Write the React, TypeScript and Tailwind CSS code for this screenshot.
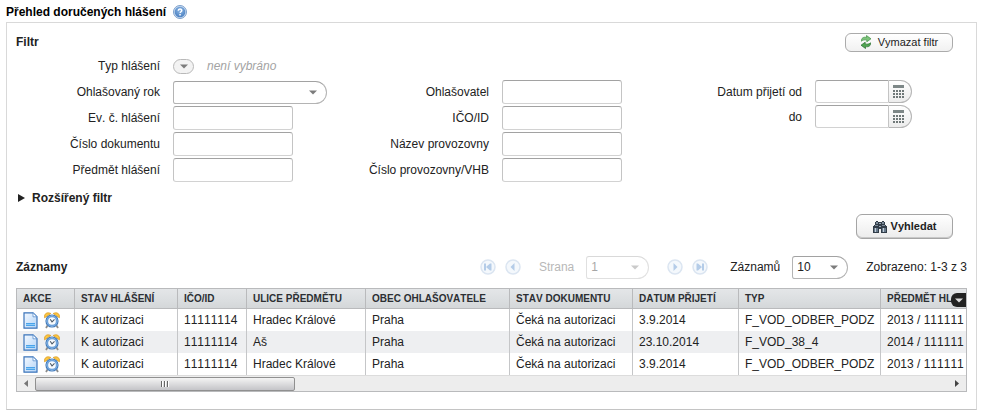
import { ReactNode } from "react";
import clsx from "clsx";

type Row = {
  stav: string;
  ico: string;
  ulice: string;
  obec: string;
  dokument: string;
  prijeti: string;
  typ: string;
  predmet: string;
};

const rows: Row[] = [
  {
    stav: "K autorizaci",
    ico: "11111114",
    ulice: "Hradec Králové",
    obec: "Praha",
    dokument: "Čeká na autorizaci",
    prijeti: "3.9.2014",
    typ: "F_VOD_ODBER_PODZ",
    predmet: "2013 / 111111",
  },
  {
    stav: "K autorizaci",
    ico: "11111114",
    ulice: "Aš",
    obec: "Praha",
    dokument: "Čeká na autorizaci",
    prijeti: "23.10.2014",
    typ: "F_VOD_38_4",
    predmet: "2014 / 111111",
  },
  {
    stav: "K autorizaci",
    ico: "11111114",
    ulice: "Hradec Králové",
    obec: "Praha",
    dokument: "Čeká na autorizaci",
    prijeti: "3.9.2014",
    typ: "F_VOD_ODBER_PODZ",
    predmet: "2013 / 111111",
  },
];

const columns = [
  { title: "AKCE", width: "w-[58px]" },
  { title: "STAV HLÁŠENÍ", width: "w-[103px]" },
  { title: "IČO/ID", width: "w-[69px]" },
  { title: "ULICE PŘEDMĚTU", width: "w-[119px]" },
  { title: "OBEC OHLAŠOVATELE", width: "w-[144px]" },
  { title: "STAV DOKUMENTU", width: "w-[123px]" },
  { title: "DATUM PŘIJETÍ", width: "w-[106px]" },
  { title: "TYP", width: "w-[142px]" },
  { title: "PŘEDMĚT HL", width: "w-[85px]" },
];

const inputClass =
  "border border-[#c4c4c4] border-t-[#a2a2a2] border-b-[#d2d2d2] bg-white px-1.5 text-xs outline-none";

const HelpIcon = () => (
  <svg width="14" height="14" viewBox="0 0 14 14">
    <defs>
      <radialGradient id="help" cx="50%" cy="35%" r="65%">
        <stop offset="0" stopColor="#8fb9e6" />
        <stop offset="1" stopColor="#4a7fc0" />
      </radialGradient>
    </defs>
    <circle cx="7" cy="7" r="6.5" fill="#c9dcf1" stroke="#7c9fcb" />
    <circle cx="7" cy="7" r="5.3" fill="url(#help)" />
    <path
      d="M5.2 5.7c0-2.3 3.6-2.3 3.6-.2 0 1.3-1.7 1.3-1.7 2.6"
      fill="none"
      stroke="#fff"
      strokeWidth="1.4"
    />
    <rect x="6.3" y="9" width="1.5" height="1.5" fill="#fff" />
  </svg>
);

const RefreshIcon = () => (
  <svg width="12" height="14" viewBox="0 0 12 14">
    <path
      d="M1.500 6.200C1.200 2.800 3.500 1.800 6.500 2.400V.5L11 3.800 6.800 6.800V5.100C4.500 4.500 3 4.900 1.500 6.200z"
      fill="#7cc47a"
      stroke="#3f8f43"
      strokeWidth=".7"
    />
    <path
      d="M10.500 7.800C10.800 11.200 8.500 12.200 5.500 11.600V13.500L1 10.200 5.200 7.200V8.900C7.500 9.500 9 9.100 10.500 7.800z"
      fill="#4fa551"
      stroke="#256b2d"
      strokeWidth=".7"
    />
  </svg>
);

const BinocularsIcon = () => (
  <svg width="14" height="12" viewBox="0 0 14 12" shapeRendering="crispEdges">
    <path d="M3 0h2v1h4V0h2v1h1v3h1v1h1v7H8V8H6v4H0V5h1V4h1V1h1z" fill="#323d48" />
    <path d="M3 1h2v2H3zM9 1h2v2H9zM2 4h3v1H2zM9 4h3v1H9z" fill="#7d8c9a" />
    <path d="M6 2h2v1H6zM6 5h2v1H6z" fill="#98a5b2" />
    <path d="M1 7h4v4H1zM9 7h4v4H9z" fill="#66788a" />
    <path d="M2 7h1v4H2zM10 7h1v4h-1z" fill="#c3ced9" />
  </svg>
);

const CalendarIcon = () => (
  <svg width="12" height="14" viewBox="0 0 12 14" shapeRendering="crispEdges">
    <rect width="11" height="3" fill="#7d8787" />
    {[5, 8, 11].map((y) =>
      [0, 3, 6, 9].map((x) => (
        <rect key={`${x} ${y}`} x={x} y={y} width="2" height="2" fill="#6f7878" />
      )),
    )}
  </svg>
);

const DocumentIcon = () => (
  <svg width="15" height="17" viewBox="0 0 15 17">
    <defs>
      <linearGradient id="doc" x1="0" y1="0" x2="1" y2="1">
        <stop offset="0" stopColor="#f4f9ff" />
        <stop offset="1" stopColor="#b4d4f7" />
      </linearGradient>
    </defs>
    <path
      d="M1 .8h9l4 4v11.400H1z"
      fill="url(#doc)"
      stroke="#3b74ba"
      strokeWidth="1.200"
    />
    <path d="M10 .8v4h4z" fill="#fff" stroke="#5b8fce" strokeWidth=".8" />
    <rect x="3" y="11" width="9" height="3" fill="#4aa3ea" />
    <rect x="3" y="12" width="9" height="1" fill="#8ecbf8" />
  </svg>
);

const ClockIcon = () => (
  <svg width="16" height="17" viewBox="0 0 16 17">
    <path d="M3.500 13.500l-1.500 2.500M12.500 13.500l1.500 2.500" stroke="#8b8b8b" strokeWidth="1.800" />
    <path
      d="M.6 5.800C-.2 1.600 3.200-.3 6.800 1.500zM15.400 5.800C16.200 1.600 12.800-.3 9.200 1.500z"
      fill="#fbc844"
      stroke="#dc9b22"
      strokeWidth=".8"
    />
    <circle cx="8" cy="9" r="6" fill="#f8fbfe" stroke="#3f78b8" strokeWidth="1.200" />
    <circle cx="8" cy="9" r="4.700" fill="none" stroke="#6ea3dc" strokeWidth="1.700" />
    <path d="M6.200 7.300L8 9.800l2.500-2.500" fill="none" stroke="#4d5a68" strokeWidth="1.100" />
  </svg>
);

const Arrow = ({ className }: { className?: string }) => (
  <svg width="8" height="5" viewBox="0 0 8 5" className={className}>
    <path d="M0 .5h8l-4 4z" fill="currentColor" />
  </svg>
);

const Field = ({
  id,
  label,
  children,
}: {
  id: string;
  label: string;
  children?: ReactNode;
}) => (
  <div className="flex h-6 items-center gap-[13px]">
    <label htmlFor={id} className="w-36 shrink-0 text-right">
      {label}
    </label>
    {children ?? (
      <input id={id} type="text" className={clsx(inputClass, "h-6 w-30 rounded-[3px]")} />
    )}
  </div>
);

const DateField = ({ id, label }: { id: string; label: string }) => (
  <div className="flex h-[23px] items-center gap-[13px]">
    <label htmlFor={id} className="w-36 shrink-0 text-right">
      {label}
    </label>
    <div className="flex">
      <input
        id={id}
        type="text"
        className={clsx(inputClass, "h-[23px] w-[74px] rounded-l-[3px]")}
      />
      <button
        type="button"
        aria-label="Kalendář"
        className="flex h-[23px] w-[23px] items-center rounded-r-full border border-l-0 border-[#b5b5b5] bg-linear-to-b from-white to-[#ececec] pl-1"
      >
        <CalendarIcon />
      </button>
    </div>
  </div>
);

const Select = ({
  id,
  value,
  className,
  disabled,
}: {
  id: string;
  value: string;
  className: string;
  disabled?: boolean;
}) => (
  <div className={clsx("relative", disabled && "opacity-40")}>
    <select
      id={id}
      disabled={disabled}
      className={clsx(
        "block h-[23px] appearance-none rounded-l-[3px] rounded-r-xl border border-[#b4b4b4] border-t-[#a2a2a2] bg-white pl-1 text-xs outline-none",
        className,
      )}
    >
      <option>{value}</option>
    </select>
    <Arrow className="pointer-events-none absolute top-1/2 right-2.5 -mt-0.5 text-[#7c7c7c]" />
  </div>
);

const PagerButton = ({ label, path }: { label: string; path: string }) => (
  <button type="button" disabled aria-label={label}>
    <svg width="16" height="16" viewBox="0 0 16 16">
      <circle cx="8" cy="8" r="7" fill="#f4f8fc" stroke="#dbe5f1" strokeWidth="1.500" />
      <path d={path} fill="#b4cce8" />
    </svg>
  </button>
);

const Filter = () => (
  <section>
    <div className="flex h-5 items-center justify-between pr-3.5">
      <h2 className="font-bold">Filtr</h2>
      <button
        type="button"
        className="flex h-[19px] w-27 items-center justify-center gap-1.5 rounded-md border border-[#ababab] bg-linear-to-b from-white to-[#f1f1f1] text-[11px]"
      >
        <RefreshIcon />
        Vymazat filtr
      </button>
    </div>
    <div className="mt-0.5 grid grid-cols-[329fr_313fr_309fr]">
      <div className="flex flex-col gap-0.5">
        <Field id="typ" label="Typ hlášení">
          <button
            id="typ"
            type="button"
            className="flex h-[15px] w-[21px] items-center justify-center rounded-full border border-[#b9b9b9] bg-[#f3f3f3] text-[#7c7c7c]"
          >
            <Arrow />
          </button>
          <span className="text-[#a3a3a3] italic">není vybráno</span>
        </Field>
        <Field id="rok" label="Ohlašovaný rok">
          <Select id="rok" value="" className="w-[154px]" />
        </Field>
        <Field id="evc" label="Ev. č. hlášení" />
        <Field id="cislo" label="Číslo dokumentu" />
        <Field id="predmet" label="Předmět hlášení" />
      </div>
      <div className="flex flex-col gap-0.5 pt-[26px]">
        <Field id="ohlasovatel" label="Ohlašovatel" />
        <Field id="ico" label="IČO/ID" />
        <Field id="nazev" label="Název provozovny" />
        <Field id="vhb" label="Číslo provozovny/VHB" />
      </div>
      <div className="flex flex-col gap-0.5 pt-[26px]">
        <DateField id="od" label="Datum přijetí od" />
        <DateField id="do" label="do" />
      </div>
    </div>
    <button type="button" className="mt-2 flex h-4 items-center gap-[7px] pl-0.5 font-bold">
      <svg width="7" height="8" viewBox="0 0 7 8">
        <path d="M0 0l7 4-7 4z" fill="#222" />
      </svg>
      Rozšířený filtr
    </button>
    <div className="mt-2 flex justify-end pr-3.5">
      <button
        type="button"
        className="flex h-[25px] w-[97px] items-center justify-center gap-1 rounded-md border border-[#a5a5a5] bg-linear-to-b from-white to-[#ececec] text-[11px] font-bold shadow-[inset_0_-1px_0_#c8c8c8]"
      >
        <BinocularsIcon />
        Vyhledat
      </button>
    </div>
  </section>
);

const Pager = () => (
  <div className="mt-4 flex h-6 items-center justify-between">
    <h2 className="font-bold">Záznamy</h2>
    <div className="flex items-center gap-[18px]">
      <div className="flex items-center gap-[9px]">
        <PagerButton label="První" path="M4 4.500h2v7H4zM10 4.500v7L6 8zM10 4.500h1.500v7H10z" />
        <PagerButton label="Předchozí" path="M9.500 4v8l-4-4z" />
      </div>
      <div className="flex items-center gap-3">
        <label htmlFor="strana" className="text-[#b8b8b8]">
          Strana
        </label>
        <Select id="strana" value="1" className="w-[63px]" disabled />
      </div>
      <div className="flex items-center gap-[9px]">
        <PagerButton label="Další" path="M6.500 4v8l4-4z" />
        <PagerButton label="Poslední" path="M10 4.500h2v7h-2zM4.500 4.500v7h1.500L10 8 6 4.500z" />
      </div>
      <div className="ml-1 flex items-center gap-3">
        <label htmlFor="zaznamu">Záznamů</label>
        <Select id="zaznamu" value="10" className="w-14" />
      </div>
      <span>Zobrazeno: 1-3 z 3</span>
    </div>
  </div>
);

const Records = () => (
  <div className="relative mt-[9px] border border-[#b9babc]">
    <table className="w-full table-fixed border-separate border-spacing-0 whitespace-nowrap">
      <thead>
        <tr className="h-5 bg-linear-to-b from-[#e4e6e8] via-[#dcdfe1] to-[#d3d6d8]">
          {columns.map((column) => (
            <th
              key={column.title}
              className={clsx(
                "border-r border-b border-[#b9babc] p-0 pl-1.5 text-left text-[10px] leading-4 font-bold text-[#2c2f33] last:border-r-0",
                column.width,
              )}
            >
              {column.title}
            </th>
          ))}
        </tr>
      </thead>
      <tbody>
        {rows.map((row, i) => (
          <tr key={i} className="h-[22px] even:bg-[#eeeff1]">
            <td className="border-r border-[#c5c6c8] p-0 pl-1.5">
              <div className="flex items-center gap-1.5">
                <button type="button" aria-label="Detail">
                  <DocumentIcon />
                </button>
                <button type="button" aria-label="Historie">
                  <ClockIcon />
                </button>
              </div>
            </td>
            {Object.values(row).map((value, j) => (
              <td key={j} className="border-r border-[#c5c6c8] p-0 pl-1.5 last:border-r-0">
                {value}
              </td>
            ))}
          </tr>
        ))}
      </tbody>
    </table>
    <button
      type="button"
      aria-label="Sloupce"
      className="absolute top-1 right-0 flex h-3.5 w-[15px] items-center justify-center rounded-l-md bg-[#222] text-[#ddd]"
    >
      <Arrow />
    </button>
    {/* horizontal scrollbar */}
    <div className="flex h-4 items-center border-t border-[#dcdcdc] bg-[#ededed]">
      <button type="button" aria-label="Doleva" className="flex w-[18px] justify-center">
        <svg width="4" height="7" viewBox="0 0 4 7">
          <path d="M4 0v7L0 3.500z" fill="#777" />
        </svg>
      </button>
      <div className="flex-1">
        <div className="flex h-3.5 w-[260px] items-center justify-center gap-px rounded-xs border border-[#909090] bg-linear-to-b from-[#f4f4f4] via-[#dcdcde] to-[#c4c4c8]">
          <span className="h-1.5 w-0.5 border-r border-white bg-[#666]" />
          <span className="h-1.5 w-0.5 border-r border-white bg-[#666]" />
          <span className="h-1.5 w-0.5 border-r border-white bg-[#666]" />
        </div>
      </div>
      <button type="button" aria-label="Doprava" className="flex w-[18px] justify-center">
        <svg width="4" height="7" viewBox="0 0 4 7">
          <path d="M0 0v7l4-3.500z" fill="#444" />
        </svg>
      </button>
    </div>
  </div>
);

export default function App() {
  return (
    <main className="bg-white px-1.5 pt-1 pb-1.5 font-['Liberation_Sans',Arial,sans-serif] text-xs text-[#222] [font-kerning:none]">
      <div className="flex h-[18px] items-start gap-[7px]">
        <h1 className="font-bold text-black">Přehled doručených hlášení</h1>
        <button type="button" aria-label="Nápověda" className="mt-px">
          <HelpIcon />
        </button>
      </div>
      <div className="border border-[#d9d9d9] border-b-[#c4c4c4] px-[9px] pt-[9px] pb-[17px]">
        <Filter />
        <Pager />
        <Records />
      </div>
    </main>
  );
}
